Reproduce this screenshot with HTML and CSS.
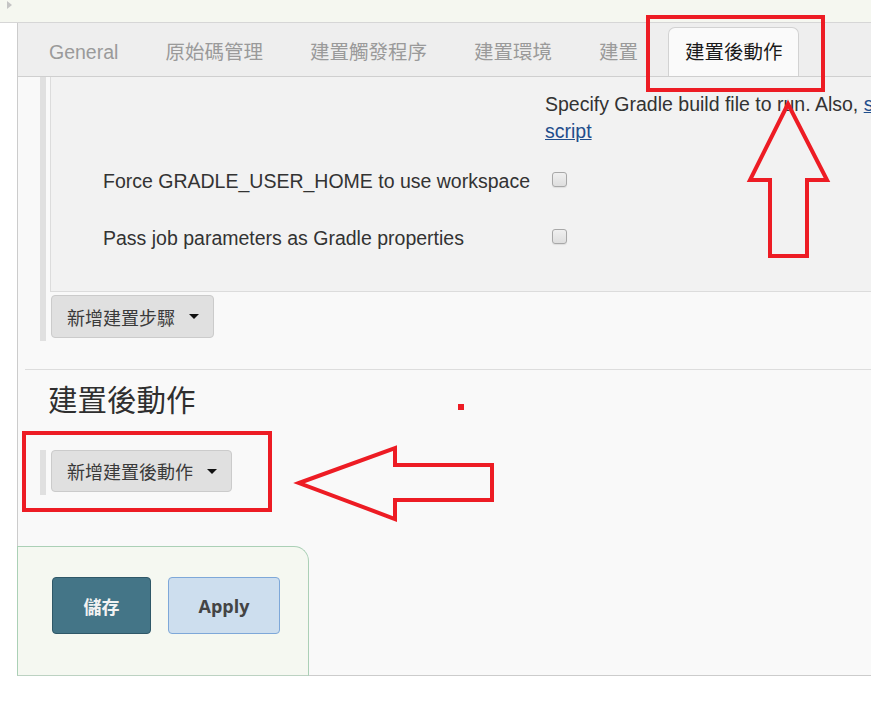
FILE: index.html
```html
<!DOCTYPE html>
<html lang="zh-Hant">
<head>
<meta charset="utf-8">
<title>建置後動作</title>
<link rel="stylesheet" href="styles.css">
</head>
<body>
<div class="page">
  <div class="topbar"><span class="tri"></span></div>
  <div class="layout">
    <div class="gutter"></div>
    <div class="main">
      <div class="tabbar">
        <div class="tab">General</div>
        <div class="tab">原始碼管理</div>
        <div class="tab">建置觸發程序</div>
        <div class="tab">建置環境</div>
        <div class="tab">建置</div>
        <div class="tab active">建置後動作</div>
      </div>
      <div class="content">
        <div class="stripe">
          <div class="panel">
            <div class="desc-row">
              <div class="desc">Specify Gradle build file to run. Also, <a href="#">some environment variables are available to the build</a><br><a href="#">script</a></div>
            </div>
            <div class="opt-row first">
              <div class="opt-label">Force GRADLE_USER_HOME to use workspace</div>
              <input type="checkbox" class="chk">
            </div>
            <div class="opt-row">
              <div class="opt-label">Pass job parameters as Gradle properties</div>
              <input type="checkbox" class="chk">
            </div>
          </div>
          <button class="drop-btn">新增建置步驟 <span class="caret"></span></button>
        </div>
        <div class="separator"></div>
        <h2 class="section-title">建置後動作</h2>
        <div class="stripe post">
          <button class="drop-btn">新增建置後動作 <span class="caret"></span></button>
        </div>
        <div class="footer-row">
          <div class="footer">
            <button class="btn-save">儲存</button>
            <button class="btn-apply">Apply</button>
          </div>
          <div class="footer-fill"></div>
        </div>
      </div>
    </div>
  </div>
  <svg class="annot" width="871" height="711" viewBox="0 0 871 711">
    <rect x="648" y="17" width="175" height="73" fill="none" stroke="#ed1c24" stroke-width="4"/>
    <polygon points="788,104 750,180 770,180 770,256 807,256 807,180 827,180" fill="none" stroke="#ed1c24" stroke-width="4" stroke-linejoin="miter"/>
    <rect x="24" y="433" width="246" height="77" fill="none" stroke="#ed1c24" stroke-width="4"/>
    <polygon points="299,483 395,448 395,465 492,465 492,500 395,500 395,519" fill="none" stroke="#ed1c24" stroke-width="4" stroke-linejoin="miter"/>
    <rect x="458" y="404" width="6" height="6" fill="#ed1c24"/>
  </svg>
</div>
</body>
</html>
```

FILE: styles.css
```css
html, body {
  margin: 0;
  padding: 0;
  background: #ffffff;
}
body {
  width: 871px;
  height: 711px;
  overflow: hidden;
  font-family: "Liberation Sans", "Noto Sans CJK TC", sans-serif;
  color: #333333;
}
.page {
  position: relative;
  width: 871px;
  height: 711px;
  overflow: hidden;
}
.topbar {
  height: 22px;
  background: #f5f7f0;
  border-bottom: 1px solid #d6d6d6;
  display: flex;
  align-items: flex-start;
}
.tri {
  width: 0;
  height: 0;
  margin: 1px 0 0 7px;
  border-left: 5px solid #c4c4c4;
  border-top: 4px solid transparent;
  border-bottom: 4px solid transparent;
}
.layout {
  display: flex;
  align-items: flex-start;
}
.gutter {
  width: 17px;
  flex: none;
}
.main {
  width: 1200px;
  flex: none;
  border-left: 1px solid #cccccc;
  background: #f9f9f9;
}
.tabbar {
  height: 53px;
  background: #eeeeee;
  border-bottom: 1px solid #cfcfcf;
  display: flex;
  align-items: flex-end;
  gap: 13px;
  padding-left: 14px;
}
.tab {
  height: 48px;
  line-height: 48px;
  padding: 0 16px;
  font-size: 19.5px;
  color: #9a9a9a;
  border: 1px solid transparent;
  border-bottom: none;
  white-space: nowrap;
}
.tab.active {
  background: #fafafa;
  color: #1a1a1a;
  border-color: #d2d2d2;
  border-radius: 7px 7px 0 0;
}
.content {
  display: flex;
  flex-direction: column;
}
.stripe {
  margin-left: 22px;
  border-left: 6px solid #e0e0e0;
  padding-left: 4px;
  padding-bottom: 3px;
  display: flex;
  flex-direction: column;
  align-items: flex-start;
}
.panel {
  align-self: stretch;
  background: #f2f2f2;
  border-left: 1px solid #dcdcdc;
  border-bottom: 1px solid #dcdcdc;
  padding-top: 14px;
  padding-bottom: 24px;
}
.desc-row {
  padding-left: 494px;
}
.desc {
  font-size: 19.5px;
  line-height: 27px;
  white-space: nowrap;
  color: #333333;
}
.desc a {
  color: #1f4e8c;
  text-decoration: underline;
}
.opt-row {
  height: 57px;
  display: flex;
  align-items: center;
}
.opt-row.first {
  margin-top: 8px;
}
.opt-label {
  width: 494px;
  box-sizing: border-box;
  padding-left: 52px;
  font-size: 19.5px;
  color: #333333;
  white-space: nowrap;
}
.chk {
  appearance: none;
  -webkit-appearance: none;
  width: 15px;
  height: 15px;
  margin: 0 0 5px 7px;
  border: 1px solid #a8a8a8;
  border-radius: 3px;
  background: linear-gradient(#f0f0f0, #dedede);
  box-shadow: 0 1px 1px rgba(0,0,0,0.08);
}
.drop-btn {
  margin: 3px 0 0 1px;
  height: 43px;
  padding: 0 14px 0 15px;
  background: #e0e0e0;
  border: 1px solid #cbcbcb;
  border-radius: 4px;
  font-family: "Noto Sans CJK TC", sans-serif;
  font-size: 18px;
  color: #3a3a3a;
  display: flex;
  align-items: center;
  gap: 14px;
}
.caret {
  width: 0;
  height: 0;
  border-top: 5px solid #111111;
  border-left: 5px solid transparent;
  border-right: 5px solid transparent;
}
.separator {
  margin: 28px 0 0 7px;
  border-top: 1px solid #dddddd;
}
.section-title {
  margin: 10px 0 0 30px;
  font-family: "Noto Sans CJK TC", sans-serif;
  font-size: 29.5px;
  line-height: 36px;
  font-weight: normal;
  color: #2f2f2f;
}
.stripe.post {
  margin-top: 34px;
  padding-bottom: 3px;
  padding-left: 4px;
}
.stripe.post .drop-btn {
  margin-top: 0;
  height: 42px;
}
.footer-row {
  margin-top: 51px;
  display: flex;
  align-items: stretch;
}
.footer {
  margin-left: -1px;
  width: 292px;
  height: 130px;
  box-sizing: border-box;
  background: #f5f8f1;
  border: 1px solid #abd0b6;
  border-bottom-color: #bcd2c2;
  border-radius: 0 15px 0 0;
  padding: 30px 0 0 34px;
  display: flex;
  align-items: flex-start;
  gap: 17px;
}
.footer-fill {
  flex: 1;
  border-bottom: 1px solid #cccccc;
}
.btn-save {
  width: 99px;
  height: 57px;
  background: #447587;
  border: 1px solid #2f5868;
  border-radius: 4px;
  color: #f2f2f2;
  font-family: "Noto Sans CJK TC", sans-serif;
  font-size: 18px;
  font-weight: bold;
}
.btn-apply {
  width: 112px;
  height: 57px;
  background: #cddeee;
  border: 1px solid #7ea8d9;
  border-radius: 4px;
  color: #444444;
  font-family: "Open Sans", sans-serif;
  font-size: 18px;
  font-weight: bold;
}
.annot {
  position: absolute;
  top: 0;
  left: 0;
  pointer-events: none;
}
```
